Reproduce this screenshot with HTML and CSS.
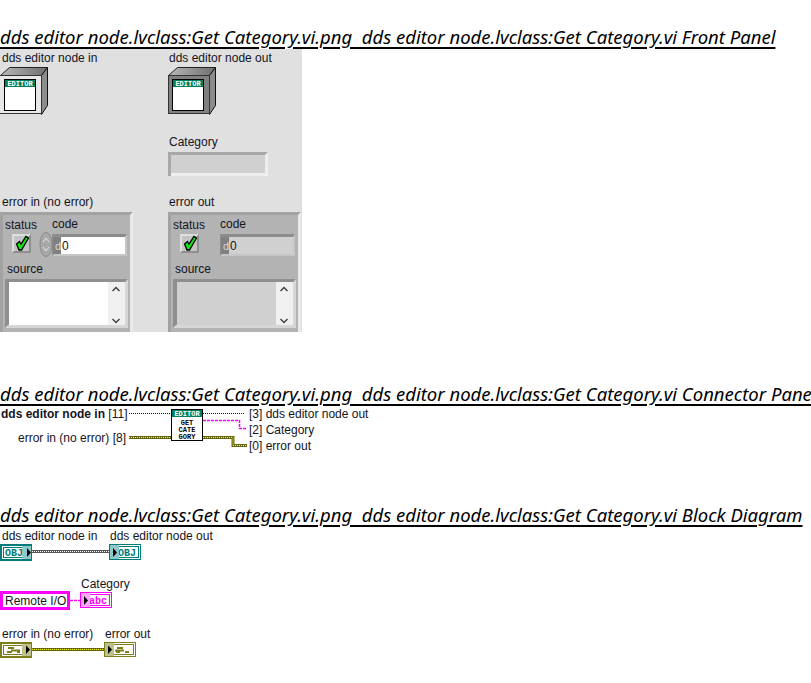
FILE: index.html
```html
<!DOCTYPE html>
<html lang="en">
<head>
    <meta charset="UTF-8">
    <title>Get Category.vi</title>
    <link rel="stylesheet" href="styles.css">
</head>
<body>
    <svg class="defs" width="0" height="0">
        <defs>
            <linearGradient id="topFace" x1="0" y1="0" x2="1" y2="0">
                <stop offset="0" stop-color="#b8b8b8"/>
                <stop offset="1" stop-color="#6e6e6e"/>
            </linearGradient>
            <g id="boxSides">
                <path d="M0.5 75.5 L9.5 67.5 H47.5 L41.5 75.5 Z" fill="url(#topFace)" stroke="#222"/>
                <path d="M41.5 75.5 L47.5 67.5 V105.5 L41.5 114.5 Z" fill="#8c8c8c" stroke="#111"/>
            </g>
            <g id="boxWindow">
                <rect x="4.5" y="79.5" width="31" height="31" fill="#fff" stroke="#000"/>
                <rect x="5" y="80" width="30" height="7" fill="#008060"/>
                <text class="tiny" x="20" y="86.2">EDITOR</text>
            </g>
            <g id="errorCluster">
                <rect x="0" y="212" width="133" height="120" fill="#b3b3b3"/>
                <path d="M0 212 H133 L130 215 H3 V332 H0 Z" fill="#a2a2a2"/>
                <path d="M133 212 V332 H130 V215 Z" fill="#e9e9e9"/>
                <text class="lbl" x="5" y="229">status</text>
                <text class="lbl" x="52" y="228">code</text>
                <rect x="12" y="234" width="19" height="19" fill="#c4c4c4"/>
                <path d="M12 234 H31 L29 236 H14 V251 L12 253 Z" fill="#dedede"/>
                <path d="M31 234 V253 H12 L14 251 H29 V236 Z" fill="#8f8f8f"/>
                <path d="M16.500 244 L19.500 241.500 L21 244 L26 236.500 L28.500 238 L21.500 250 L19 250 Z" fill="#14e014" stroke="#000" stroke-width="1.300"/>
                <text class="lbl" x="7" y="273">source</text>
                <rect x="5" y="279" width="123" height="49" fill="#8f8f8f"/>
                <path d="M128 279 V328 H5 L8 325 H125 V282 Z" fill="#d6d6d6"/>
                <rect x="108" y="282" width="17" height="43" fill="#f0f0f0"/>
                <path d="M112.500 291 L116 287.500 L119.500 291 M112.500 319 L116 322.500 L119.500 319" fill="none" stroke="#444" stroke-width="1.500"/>
                <rect x="52" y="234" width="75" height="22" fill="#8c8c8c"/>
                <path d="M127 234 V256 H52 L54 254 H125 V237 Z" fill="#c6c6c6"/>
                <rect x="53" y="237" width="8" height="17" fill="#808080"/>
            </g>
        </defs>
    </svg>

    <h2>dds editor node.lvclass:Get Category.vi.png&nbsp; dds editor node.lvclass:Get Category.vi Front Panel</h2>
    <svg class="fig" width="811" height="283" viewBox="0 49 811 283">
        <rect x="0" y="49" width="302" height="283" fill="#e0e0e0"/>
        <text class="lbl" x="2" y="62">dds editor node in</text>
        <text class="lbl" x="169" y="62">dds editor node out</text>

        <use href="#boxSides"/>
        <rect x="0" y="75" width="41" height="39" fill="#e8e8e8"/>
        <path d="M0 75.500 H41.500 V113.500 H0" fill="none" stroke="#333"/>
        <use href="#boxWindow"/>

        <g transform="translate(168 0)">
            <use href="#boxSides"/>
            <rect x="0.500" y="75.500" width="41" height="38" fill="#808080" stroke="#333"/>
            <use href="#boxWindow"/>
        </g>

        <text class="lbl" x="169" y="146">Category</text>
        <rect x="168" y="152" width="100" height="24" fill="#eeeeee"/>
        <path d="M168 152 H268 L265 155 H171 V176 H168 Z" fill="#a9a9a9"/>
        <rect x="171" y="155" width="94" height="18" fill="#d0d0d0"/>

        <text class="lbl" x="2" y="206">error in (no error)</text>
        <text class="lbl" x="169" y="206">error out</text>

        <use href="#errorCluster"/>
        <ellipse cx="46" cy="244.500" rx="6" ry="12" fill="#a8a8a8" stroke="#8a8a8a"/>
        <path d="M43 242 L46 238 L49 242 M43 247 L46 251 L49 247" fill="none" stroke="#e4e4e4"/>
        <rect x="61" y="237" width="64" height="17" fill="#fff"/>
        <text class="dim" x="55" y="250">d</text>
        <text class="lbl" x="62" y="250">0</text>
        <rect x="9" y="282" width="99" height="43" fill="#fff"/>

        <g transform="translate(168 0)">
            <use href="#errorCluster"/>
            <rect x="61" y="237" width="64" height="17" fill="#d0d0d0"/>
            <text class="dim" x="55" y="250">d</text>
            <text class="lbl" x="62" y="250">0</text>
            <rect x="9" y="282" width="99" height="43" fill="#d0d0d0"/>
        </g>
    </svg>

    <h2>dds editor node.lvclass:Get Category.vi.png&nbsp; dds editor node.lvclass:Get Category.vi Connector Pane</h2>
    <svg class="fig" width="811" height="47" viewBox="0 406 811 47">
        <text class="lbl" x="1" y="418"><tspan class="bold">dds editor node in</tspan> [11]</text>
        <text class="lbl end" x="126" y="442">error in (no error) [8]</text>
        <text class="lbl" x="249" y="418">[3] dds editor node out</text>
        <text class="lbl" x="249" y="434">[2] Category</text>
        <text class="lbl" x="249" y="450">[0] error out</text>

        <path d="M129 413.500 H171 M203 413.500 H245" class="wire-obj"/>
        <path d="M203 420.500 H239.500 V428.500 H246" class="wire-str"/>
        <path d="M129 437.500 H171 M203 437.500 H233 V445.500 H247" class="wire-err"/>
        <path d="M129 437.500 H171 M203 437.500 H233 V445.500 H247" class="wire-err-dot"/>

        <rect x="171.500" y="409.500" width="31" height="31" fill="#fff" stroke="#000"/>
        <rect x="172" y="410" width="30" height="7" fill="#008060"/>
        <text class="tiny" x="187" y="416.200">EDITOR</text>
        <text class="tiny dark" x="187" y="425">GET</text>
        <text class="tiny dark" x="187" y="432">CATE</text>
        <text class="tiny dark" x="187" y="439">GORY</text>
    </svg>

    <h2>dds editor node.lvclass:Get Category.vi.png&nbsp; dds editor node.lvclass:Get Category.vi Block Diagram</h2>
    <svg class="fig" width="811" height="140" viewBox="0 527 811 140">
        <text class="lbl" x="2" y="540">dds editor node in</text>
        <text class="lbl" x="110" y="540">dds editor node out</text>

        <path d="M32 551.500 H110" stroke="#555" stroke-width="3" fill="none"/>
        <path d="M32 551.500 H110" stroke="#fff" stroke-width="1" stroke-dasharray="1 1" fill="none"/>
        <rect x="1" y="545" width="30" height="15" fill="#fff" stroke="#007b7b" stroke-width="2"/>
        <rect x="3.500" y="547.500" width="25" height="10" fill="none" stroke="#007b7b"/>
        <text class="term teal" x="14" y="556">OBJ</text>
        <rect x="22" y="546" width="9" height="13" fill="#8fc8c8"/>
        <path d="M27 548 L31 552.500 L27 557 Z" fill="#000"/>

        <rect x="109.500" y="544.500" width="31" height="15" fill="#fff" stroke="#007b7b"/>
        <rect x="111.500" y="546.500" width="27" height="11" fill="none" stroke="#007b7b"/>
        <text class="term teal" x="127" y="556">OBJ</text>
        <rect x="110" y="545" width="9" height="14" fill="#8fc8c8"/>
        <path d="M113 548 L117 552.500 L113 557 Z" fill="#000"/>

        <text class="lbl" x="81" y="588">Category</text>
        <rect x="1.500" y="592.500" width="67" height="16" fill="#fff" stroke="#ff00ff" stroke-width="3"/>
        <text class="lbl" x="5" y="605">Remote I/O</text>
        <path d="M70 600.500 H80" class="wire-str"/>
        <rect x="80.500" y="592.500" width="31" height="15" fill="#fff" stroke="#ff00ff"/>
        <rect x="82.500" y="594.500" width="27" height="11" fill="none" stroke="#ff00ff"/>
        <text class="term pink" x="98" y="604">abc</text>
        <rect x="81" y="593" width="9" height="14" fill="#ffa8ff"/>
        <path d="M84 596 L88 600.500 L84 605 Z" fill="#000"/>

        <text class="lbl" x="2" y="638">error in (no error)</text>
        <text class="lbl" x="105" y="638">error out</text>
        <path d="M32 649.500 H104" class="wire-err"/>
        <path d="M32 649.500 H104" class="wire-err-dot"/>
        <rect x="1" y="643" width="30" height="14" fill="#fff" stroke="#7f7f1a" stroke-width="2"/>
        <rect x="3.500" y="645.500" width="25" height="9" fill="none" stroke="#7f7f1a"/>
        <path d="M8 648 H14 M11 650.500 H20 M7 652 H12 M17 652 H20" stroke="#7f7f1a" stroke-width="2"/>
        <rect x="22" y="644" width="9" height="12" fill="#c0c08c"/>
        <path d="M26 645.500 L30 649.500 L26 654 Z" fill="#000"/>
        <rect x="104.500" y="642.500" width="31" height="14" fill="#fff" stroke="#7f7f1a"/>
        <rect x="106.500" y="644.500" width="27" height="10" fill="none" stroke="#7f7f1a"/>
        <path d="M117 648 H123 M115 650.500 H124 M116 652 H120 M125 652 H129" stroke="#7f7f1a" stroke-width="2"/>
        <rect x="105" y="643" width="9" height="13" fill="#c0c08c"/>
        <path d="M108 645.500 L112 649.500 L108 654 Z" fill="#000"/>
    </svg>
</body>
</html>
```

FILE: styles.css
```css
body {
    margin: 0;
    background-color: #fff;
    overflow: hidden;
}
h2 {
    margin: 0;
    padding-top: 51px;
    padding-bottom: 2px;
    font-family: "Noto Sans", sans-serif;
    font-size: 18.5px;
    font-weight: normal;
    font-style: italic;
    line-height: 21px;
    color: #000;
    text-decoration: underline;
    text-decoration-thickness: 2px;
    text-underline-offset: 3px;
    white-space: nowrap;
}
.defs {
    position: absolute;
}
.defs + h2 {
    padding-top: 26px;
}
.fig {
    display: block;
}
.fig rect, .defs rect {
    shape-rendering: crispEdges;
}
.lbl {
    font-family: "Liberation Sans", sans-serif;
    font-size: 12px;
    fill: #14141e;
}
.bold {
    font-weight: bold;
}
.end {
    text-anchor: end;
}
.dim {
    font-family: "Liberation Sans", sans-serif;
    font-size: 11px;
    fill: #d8d8d8;
}
.tiny {
    font-family: "Liberation Mono", monospace;
    font-size: 7px;
    font-weight: bold;
    text-anchor: middle;
    fill: #fff;
}
.tiny.dark {
    fill: #000;
}
.term {
    font-family: "Liberation Mono", monospace;
    font-size: 10px;
    font-weight: bold;
    text-anchor: middle;
}
.teal {
    fill: #007b7b;
}
.pink {
    fill: #ff00ff;
}
.wire-obj {
    fill: none;
    stroke: #0000c0;
    stroke-dasharray: 1 1;
}
.wire-str {
    fill: none;
    stroke: #ff00ff;
    stroke-width: 1.5;
    stroke-dasharray: 3 1;
}
.wire-err {
    fill: none;
    stroke: #66660f;
    stroke-width: 3;
}
.wire-err-dot {
    fill: none;
    stroke: #ffff00;
    stroke-dasharray: 1 1;
}
```
